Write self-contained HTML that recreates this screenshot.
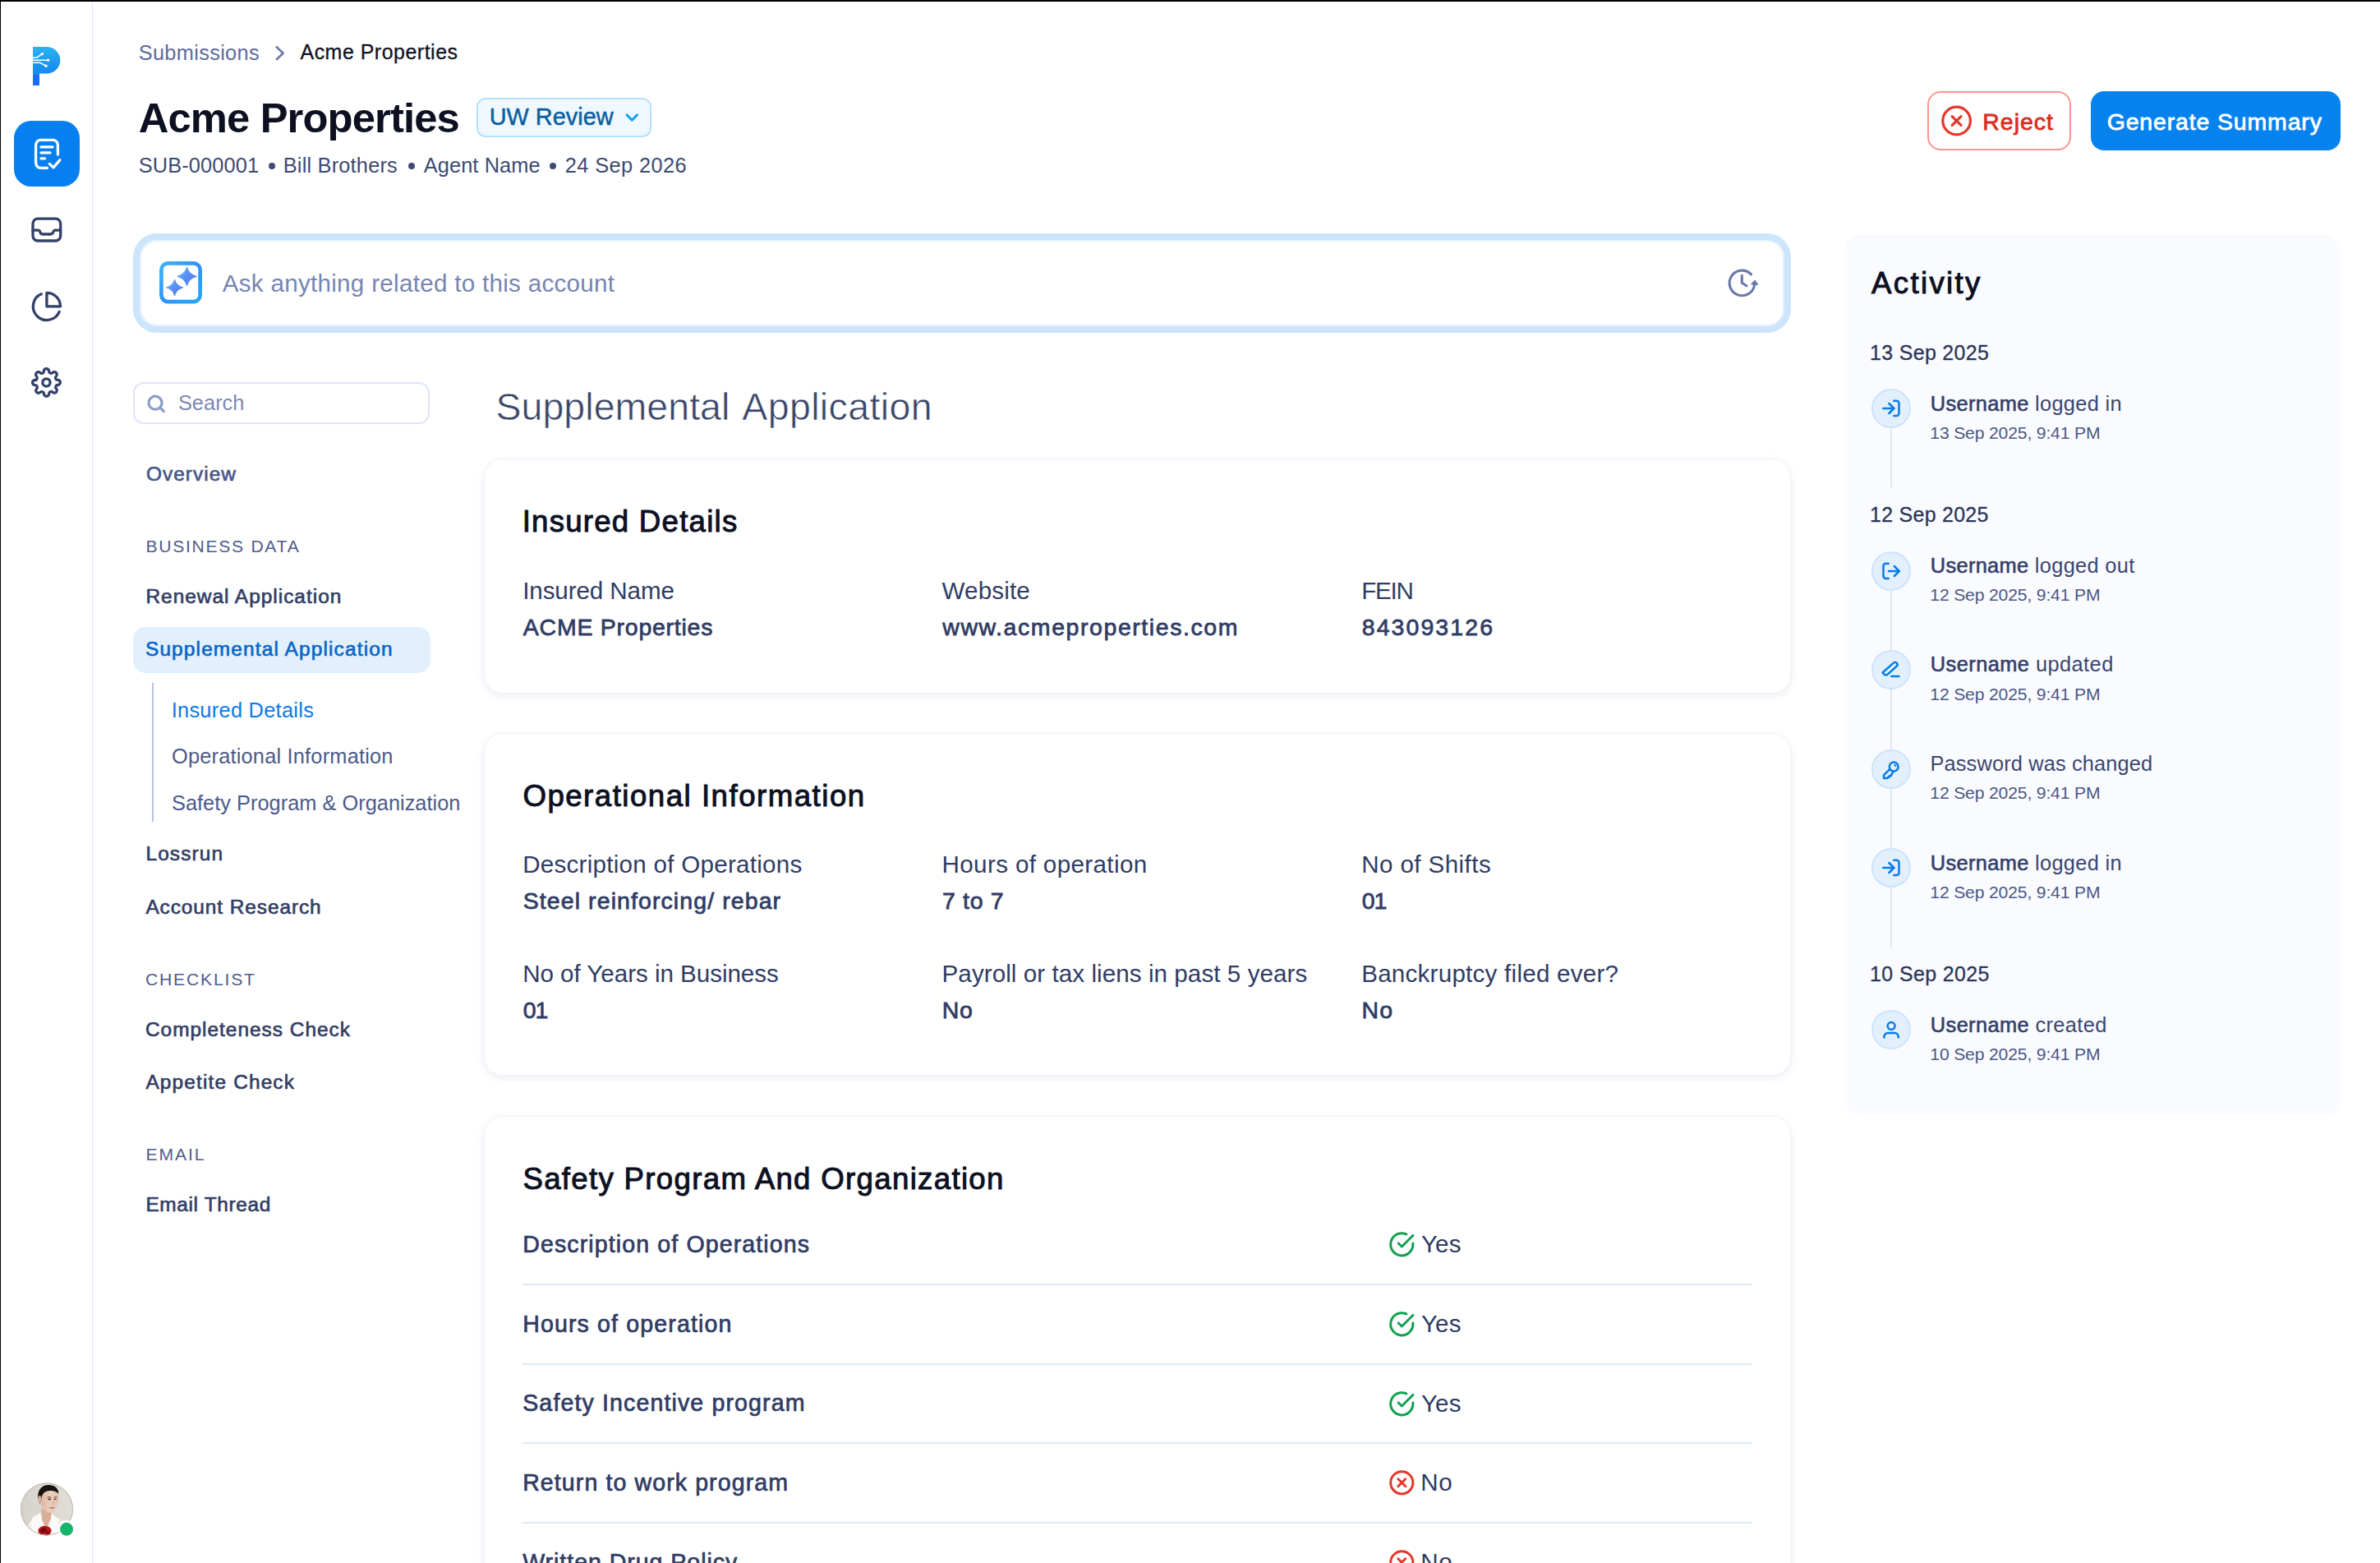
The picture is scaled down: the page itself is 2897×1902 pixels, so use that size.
<!DOCTYPE html>
<html lang="en">
<head>
<meta charset="utf-8">
<title>Acme Properties - Supplemental Application</title>
<style>
*{box-sizing:border-box;margin:0;padding:0}
html,body{width:2897px;height:1902px;overflow:hidden;background:#fff}
body{position:relative;font-family:"Liberation Sans",sans-serif;color:#38446b}
.a{position:absolute}
.t{position:absolute;white-space:pre;font-weight:400}
.t b{font-weight:700}
svg{position:absolute;overflow:visible}
.card{position:absolute;left:588.5px;width:1591.5px;background:#fff;border:1.5px solid #edf2fe;border-radius:23px;
 box-shadow:0 3px 10px rgba(105,110,150,.12)}
.div{position:absolute;left:636.2px;width:1496.5px;height:2px;background:#dfe7fb}
.ic{position:absolute;left:2277.5px;width:48px;height:48px;border-radius:50%;background:#e2f0fe;border:2px solid #cde3fb}
.vl{position:absolute;left:2300.5px;width:2px;background:#dfe6fb}
</style>
</head>
<body>

<!-- ===== window edges ===== -->
<div class="a" style="left:0;top:0;width:2897px;height:2px;background:#000"></div>
<div class="a" style="left:0;top:0;width:1px;height:1902px;background:#000"></div>

<!-- ===== icon rail ===== -->
<div class="a" style="left:111.5px;top:2px;width:1.8px;height:1900px;background:#e0e5fd"></div>

<!-- logo -->
<svg style="left:36px;top:52px" width="44" height="56" viewBox="36 52 44 56">
 <defs>
  <linearGradient id="lg1" x1="0" y1="0" x2="0" y2="1">
   <stop offset="0" stop-color="#29b4ef"/><stop offset=".55" stop-color="#1a8ff0"/><stop offset="1" stop-color="#1a7ff2"/>
  </linearGradient>
 </defs>
 <path d="M40 57H57A16.3 16.3 0 0 1 57 89.6H48V104H40Z" fill="url(#lg1)"/>
 <rect x="40" y="91" width="8" height="13" fill="#1a6ff6"/>
 <g fill="none" stroke="#fff" stroke-width="1.5" stroke-linecap="round" stroke-linejoin="round">
  <path d="M40 70.2H44.8L51 65.8"/><path d="M40 73.2H58"/><path d="M40 76.2H48.5L55.6 80"/>
 </g>
 <g fill="#fff"><circle cx="51.4" cy="65.6" r="1.7"/><circle cx="58.5" cy="73.2" r="1.7"/><circle cx="56" cy="80.3" r="1.7"/></g>
</svg>

<!-- active nav button -->
<div class="a" style="left:17px;top:147px;width:80px;height:80px;border-radius:21px;background:#0680f0"></div>
<svg style="left:36px;top:163px" width="44" height="48" viewBox="36 163 44 48" fill="none" stroke="#fff" stroke-width="3.3" stroke-linecap="round" stroke-linejoin="round">
 <path d="M57.5 204.3H49.6A6 6 0 0 1 43.6 198.3V176.4A6 6 0 0 1 49.6 170.4H64.4A6 6 0 0 1 70.4 176.4V188"/>
 <path d="M50 178.9H64"/><path d="M50 185.9H61"/><path d="M50 192.8H54.5"/>
 <path d="M60.2 199.4L65 203.8L72.8 194.8"/>
</svg>

<!-- inbox -->
<svg style="left:36px;top:262px" width="42" height="36" viewBox="36 262 42 36" fill="none" stroke="#344069" stroke-width="3.3" stroke-linecap="round" stroke-linejoin="round">
 <rect x="40" y="266.2" width="33.7" height="26.8" rx="6"/>
 <path d="M40 280.2H46.5C48 280.2 48.3 281 48.8 282.3C49.5 284.2 50.4 285 52.3 285H61.4C63.3 285 64.2 284.2 64.9 282.3C65.4 281 65.7 280.2 67.2 280.2H73.7"/>
</svg>

<!-- pie chart -->
<svg style="left:36.7px;top:353.1px" width="39.84" height="39.84" viewBox="0 0 24 24" fill="none" stroke="#344069" stroke-width="2" stroke-linecap="round" stroke-linejoin="round">
 <path d="M21.21 15.89A10 10 0 1 1 8 2.83"/><path d="M22 12A10 10 0 0 0 12 2v10z"/>
</svg>

<!-- settings -->
<svg style="left:38.4px;top:446.8px" width="36.9" height="36.9" viewBox="0 0 24 24" fill="none" stroke="#344069" stroke-width="2.15" stroke-linecap="round" stroke-linejoin="round">
 <circle cx="12" cy="12" r="3"/>
 <path d="M19.4 15a1.65 1.65 0 0 0 .33 1.82l.06.06a2 2 0 0 1 0 2.83 2 2 0 0 1-2.83 0l-.06-.06a1.65 1.65 0 0 0-1.82-.33 1.65 1.65 0 0 0-1 1.51V21a2 2 0 0 1-2 2 2 2 0 0 1-2-2v-.09A1.65 1.65 0 0 0 9 19.4a1.65 1.65 0 0 0-1.82.33l-.06.06a2 2 0 0 1-2.83 0 2 2 0 0 1 0-2.83l.06-.06a1.65 1.65 0 0 0 .33-1.82 1.65 1.65 0 0 0-1.51-1H3a2 2 0 0 1-2-2 2 2 0 0 1 2-2h.09A1.65 1.65 0 0 0 4.6 9a1.65 1.65 0 0 0-.33-1.82l-.06-.06a2 2 0 0 1 0-2.83 2 2 0 0 1 2.83 0l.06.06a1.65 1.65 0 0 0 1.82.33H9a1.65 1.65 0 0 0 1-1.51V3a2 2 0 0 1 2-2 2 2 0 0 1 2 2v.09a1.65 1.65 0 0 0 1 1.51 1.65 1.65 0 0 0 1.82-.33l.06-.06a2 2 0 0 1 2.83 0 2 2 0 0 1 0 2.83l-.06.06a1.65 1.65 0 0 0-.33 1.82V9a1.65 1.65 0 0 0 1.51 1H21a2 2 0 0 1 2 2 2 2 0 0 1-2 2h-.09a1.65 1.65 0 0 0-1.51 1z"/>
</svg>

<!-- avatar -->
<svg style="left:25px;top:1804px" width="66" height="66" viewBox="0 0 66 66">
 <defs>
  <clipPath id="av"><circle cx="32" cy="32.5" r="32"/></clipPath>
  <linearGradient id="avbg" x1="0" y1="0" x2="1" y2="0"><stop offset="0" stop-color="#d6d2cc"/><stop offset="1" stop-color="#e2dfda"/></linearGradient>
  <linearGradient id="avsk" x1="0" y1="0" x2="1" y2="0"><stop offset="0" stop-color="#d9b39d"/><stop offset=".6" stop-color="#ecd0be"/><stop offset="1" stop-color="#e3c1ad"/></linearGradient>
 </defs>
 <g clip-path="url(#av)">
  <rect width="66" height="66" fill="url(#avbg)"/>
  <path d="M3 66C5 51 13 46 21 43L29 40L42 42C51 45 59 51 63 66Z" fill="#efeae2"/>
  <path d="M15 42L24 37L30 52L28 66H15L12 49Z" fill="#fbfaf7"/>
  <path d="M37 37L46 45L48 66H34L35 51Z" fill="#fbfaf7"/>
  <path d="M25 32L38 33L37 44L31 57L26 45Z" fill="#d9ad96"/>
  <path d="M22.6 17C22 8 28 4.5 34.5 4.5C41 4.500 46.500 9 46.500 17C46.500 25 44 31 40 35C38 37 34.5 37.500 32 36C27 33 23.200 26 22.600 17Z" fill="url(#avsk)"/>
  <path d="M21.600 20C19.500 9 26.500 3 34 3C41 3 46.500 7 46.200 13.500C42 9.500 35 9 30 11.500C26.500 13.500 25.500 17 25 22.500Z" fill="#191310"/>
  <ellipse cx="23.400" cy="19.500" rx="1.900" ry="3.600" fill="#d5a992"/>
  <ellipse cx="23.400" cy="24.300" rx="1.300" ry="2.300" fill="#b4b4a4"/>
  <path d="M32.500 18.200Q35 17 37.500 18.400M40.500 18.300Q42.500 17.300 44.300 18" stroke="#4b2f27" stroke-width="0.9" fill="none"/>
  <ellipse cx="35.300" cy="20.400" rx="1.900" ry="0.900" fill="#3a2620"/>
  <ellipse cx="42.300" cy="20.300" rx="1.600" ry="0.800" fill="#3a2620"/>
  <path d="M39.300 21.500L40 26.500L38 27.200" stroke="#c99a86" stroke-width="0.9" fill="none"/>
  <path d="M35.500 30.600Q38.300 32.200 41.200 30.500Q38.300 31 35.500 30.600Z" fill="#b4685f" stroke="#b4685f" stroke-width="0.8"/>
  <ellipse cx="29.500" cy="59" rx="8" ry="6.200" fill="#b5121b"/>
  <ellipse cx="28" cy="58" rx="3.500" ry="2.500" fill="#6e0a10"/>
  <ellipse cx="33" cy="61" rx="2.500" ry="1.800" fill="#7d0c12"/>
  <ellipse cx="25" cy="61.500" rx="2" ry="1.500" fill="#8a0e15"/>
 </g>
 <circle cx="32" cy="32.500" r="31.500" fill="none" stroke="#bdb5ab" stroke-width="1"/>
 <circle cx="56" cy="56.800" r="10.700" fill="#fff"/>
 <circle cx="56" cy="56.800" r="8" fill="#18b56c"/>
</svg>

<!-- ===== header ===== -->
<svg style="left:330px;top:52px" width="22" height="26" viewBox="330 52 22 26" fill="none" stroke="#6a78a8" stroke-width="2.6" stroke-linecap="round" stroke-linejoin="round">
 <path d="M336.8 57.2L344.6 64.7L336.8 72.2"/>
</svg>

<div class="a" style="left:580px;top:119.2px;width:213px;height:47.6px;border-radius:11px;background:#eff8ff;border:2px solid #b5e1fb"></div>
<svg style="left:758px;top:134px" width="24" height="18" viewBox="758 134 24 18" fill="none" stroke="#0ea5e9" stroke-width="3" stroke-linecap="round" stroke-linejoin="round">
 <path d="M763 139.8L769.3 146.2L775.6 139.8"/>
</svg>

<div class="a" style="left:2346px;top:111px;width:174.6px;height:72.3px;border-radius:16px;background:#fff;border:2px solid #fb958d"></div>
<svg style="left:2361px;top:126px" width="42" height="42" viewBox="2361 126 42 42" fill="none" stroke="#e5372b" stroke-width="3.2" stroke-linecap="round">
 <circle cx="2381.6" cy="147" r="16.8"/>
 <path d="M2376.2 141.6L2387 152.4M2387 141.6L2376.2 152.4"/>
</svg>
<div class="a" style="left:2544.8px;top:111px;width:304px;height:72.3px;border-radius:16px;background:#0682ee"></div>

<div class="a" style="left:327.2px;top:197.8px;width:8px;height:8px;border-radius:50%;background:#3d4a73"></div>
<div class="a" style="left:496.5px;top:197.8px;width:8px;height:8px;border-radius:50%;background:#3d4a73"></div>
<div class="a" style="left:669.2px;top:197.8px;width:8px;height:8px;border-radius:50%;background:#3d4a73"></div>

<!-- ask box -->
<div class="a" style="left:162px;top:284px;width:2018px;height:120.5px;border-radius:29px;background:#fff;border:8px solid #cde5fb;box-shadow:inset 0 0 0 2px #e4f1fd"></div>
<svg style="left:194px;top:318px" width="52" height="52" viewBox="0 0 52 52">
 <defs>
  <linearGradient id="ai1" x1="0" y1="0" x2="1" y2="1"><stop offset="0" stop-color="#3fb2fb"/><stop offset=".5" stop-color="#2e93f8"/><stop offset="1" stop-color="#22a8fb"/></linearGradient>
  <linearGradient id="ai2" x1="0" y1="0" x2="1" y2="1"><stop offset="0" stop-color="#5cc4fb"/><stop offset=".55" stop-color="#5b86f7"/><stop offset="1" stop-color="#3f8ef8"/></linearGradient>
 </defs>
 <rect x="2.4" y="2.3" width="47.2" height="46.8" rx="8" fill="#fff" stroke="url(#ai1)" stroke-width="4.7"/>
 <path d="M33.5 6.9C35.9 13.5 38.5 16.0 45.3 18.3C38.5 20.6 35.9 23.1 33.5 29.7C31.1 23.1 28.5 20.6 21.7 18.3C28.5 16.0 31.1 13.5 33.5 6.9Z" fill="url(#ai2)" stroke="url(#ai2)" stroke-width="1" stroke-linejoin="round"/>
 <path d="M18.6 21.9C20.6 27.7 22.9 29.9 28.8 31.9C22.9 33.9 20.6 36.1 18.6 41.9C16.6 36.1 14.3 33.9 8.4 31.9C14.3 29.9 16.6 27.7 18.6 21.9Z" fill="url(#ai2)" stroke="url(#ai2)" stroke-width="1" stroke-linejoin="round"/>
</svg>
<svg style="left:2100px;top:324px" width="44" height="40" viewBox="2100 324 44 40" fill="none" stroke="#6b79a8" stroke-width="3.1" stroke-linecap="round" stroke-linejoin="round">
 <path d="M2131.6 333.9A15.3 15.3 0 1 0 2135.6 346.6"/>
 <path d="M2120.3 335.4V344.2L2126 347.8"/>
 <path d="M2132 345.8L2136.2 341.4L2139.4 346.4Z" fill="#6b79a8" stroke-width="1.4"/>
</svg>

<!-- ===== left nav ===== -->
<div class="a" style="left:162px;top:465px;width:361px;height:51px;border-radius:13px;background:#fff;border:2px solid #dfe3fc"></div>
<svg style="left:176px;top:478px" width="28" height="28" viewBox="176 478 28 28" fill="none" stroke="#8e9cc4" stroke-width="3.2" stroke-linecap="round">
 <circle cx="189" cy="490.2" r="8"/><path d="M194.9 496.2L199.3 500.6"/>
</svg>
<div class="a" style="left:162px;top:763px;width:362px;height:56px;border-radius:15px;background:#e2f0fe"></div>
<div class="a" style="left:184.6px;top:831px;width:2px;height:169px;background:#b9c3dd"></div>

<!-- ===== cards ===== -->
<div class="card" style="top:557.5px;height:286px"></div>
<div class="card" style="top:891.5px;height:417.5px"></div>
<div class="card" style="top:1358.3px;height:620px"></div>

<div class="div" style="top:1562.1px"></div>
<div class="div" style="top:1658.8px"></div>
<div class="div" style="top:1755.4px"></div>
<div class="div" style="top:1852.1px"></div>

<svg style="left:1689.9px;top:1498.2px" width="32.6" height="32.6" viewBox="0 0 24 24" fill="none" stroke="#12a150" stroke-width="2.2" stroke-linecap="round" stroke-linejoin="round"><path d="M22 11.08V12a10 10 0 1 1-5.93-9.14"/><path d="M22 4L12 14.01l-3-3"/></svg>
<svg style="left:1689.9px;top:1594.9px" width="32.6" height="32.6" viewBox="0 0 24 24" fill="none" stroke="#12a150" stroke-width="2.2" stroke-linecap="round" stroke-linejoin="round"><path d="M22 11.08V12a10 10 0 1 1-5.93-9.14"/><path d="M22 4L12 14.01l-3-3"/></svg>
<svg style="left:1689.9px;top:1691.5px" width="32.6" height="32.6" viewBox="0 0 24 24" fill="none" stroke="#12a150" stroke-width="2.2" stroke-linecap="round" stroke-linejoin="round"><path d="M22 11.08V12a10 10 0 1 1-5.93-9.14"/><path d="M22 4L12 14.01l-3-3"/></svg>
<svg style="left:1689.9px;top:1788.2px" width="32.6" height="32.6" viewBox="0 0 24 24" fill="none" stroke="#e5372b" stroke-width="2.2" stroke-linecap="round" stroke-linejoin="round"><circle cx="12" cy="12" r="10"/><path d="M15.3 8.7l-6.6 6.6M8.7 8.7l6.6 6.6"/></svg>
<svg style="left:1689.9px;top:1884.9px" width="32.6" height="32.6" viewBox="0 0 24 24" fill="none" stroke="#e5372b" stroke-width="2.2" stroke-linecap="round" stroke-linejoin="round"><circle cx="12" cy="12" r="10"/><path d="M15.3 8.7l-6.6 6.6M8.7 8.7l6.6 6.6"/></svg>

<!-- ===== activity ===== -->
<div class="a" style="left:2245px;top:284px;width:604px;height:1073.5px;border-radius:22px;background:#fafbff"></div>
<div class="vl" style="top:520px;height:73px"></div>
<div class="vl" style="top:717px;height:436px"></div>
<div class="ic" style="top:473.2px"></div>
<svg style="left:2285.5px;top:481.2px" width="32" height="32" viewBox="-16 -16 32 32" fill="none" stroke="#0a7be8" stroke-width="2.5" stroke-linecap="round" stroke-linejoin="round"><path d="M3.3 -9.2H6.5A3 3 0 0 1 9.5 -6.2V6A3 3 0 0 1 6.5 9H3.3"/><path d="M-9.7 0H3.2"/><path d="M-2.6 -6L3.4 0L-2.6 6"/></svg>
<div class="ic" style="top:670.6px"></div>
<svg style="left:2285.5px;top:678.6px" width="32" height="32" viewBox="-16 -16 32 32" fill="none" stroke="#0a7be8" stroke-width="2.5" stroke-linecap="round" stroke-linejoin="round"><path d="M-3.3 -9.2H-6.5A3 3 0 0 0 -9.5 -6.2V6A3 3 0 0 0 -6.5 9H-3.3"/><path d="M-3 0H9.6"/><path d="M3.8 -6L9.8 0L3.8 6"/></svg>
<div class="ic" style="top:791.0px"></div>
<svg style="left:2285.5px;top:799.0px" width="32" height="32" viewBox="-16 -16 32 32" fill="none" stroke="#0a7be8" stroke-width="2.5" stroke-linecap="round" stroke-linejoin="round"><g transform="translate(-0.9 -1.2) rotate(-42)"><path d="M-10.2 -2.8H7.6A2.8 2.8 0 0 1 7.6 2.8H-8.2L-10.2 0.8Z"/></g><path d="M0.4 7.9H9.4"/></svg>
<div class="ic" style="top:911.6px"></div>
<svg style="left:2285.5px;top:919.6px" width="32" height="32" viewBox="-16 -16 32 32" fill="none" stroke="#0a7be8" stroke-width="2.5" stroke-linecap="round" stroke-linejoin="round"><circle cx="3.2" cy="-3.0" r="5.4"/><path d="M-1.4 -0.2L-9.0 7.2V11.0H-5.0L-3.9 9.8L-2.6 10.1L-1.9 8.0L-0.2 8.1L2.3 2.9"/><path d="M4.2 -5.2L5.4 -3.9" stroke-width="2"/></svg>
<div class="ic" style="top:1032.3px"></div>
<svg style="left:2285.5px;top:1040.3px" width="32" height="32" viewBox="-16 -16 32 32" fill="none" stroke="#0a7be8" stroke-width="2.5" stroke-linecap="round" stroke-linejoin="round"><path d="M3.3 -9.2H6.5A3 3 0 0 1 9.5 -6.2V6A3 3 0 0 1 6.5 9H3.3"/><path d="M-9.7 0H3.2"/><path d="M-2.6 -6L3.4 0L-2.6 6"/></svg>
<div class="ic" style="top:1229.3px"></div>
<svg style="left:2285.5px;top:1237.3px" width="32" height="32" viewBox="-16 -16 32 32" fill="none" stroke="#0a7be8" stroke-width="2.5" stroke-linecap="round" stroke-linejoin="round"><circle cx="0.1" cy="-4.6" r="4.4"/><path d="M-8.6 9.5V8.6A4.6 4.6 0 0 1 -4 4H4.2A4.6 4.6 0 0 1 8.8 8.6V9.5"/></svg>

<div class="t" style="left:168.70px;top:48.50px;font-size:25.36px;line-height:30.43px;letter-spacing:0.32px;color:#5b6a9d;">Submissions</div>
<div class="t" style="left:365.50px;top:48.77px;font-size:24.92px;line-height:29.9px;letter-spacing:0.528px;color:#10131f;-webkit-text-stroke:0.3px #10131f;">Acme Properties</div>
<div class="t" style="left:168.70px;top:113.70px;font-size:50.72px;line-height:60.86px;letter-spacing:-0.857px;color:#0d1020;font-weight:700;">Acme Properties</div>
<div class="t" style="left:595.70px;top:125.34px;font-size:28.86px;line-height:34.63px;letter-spacing:0.023px;color:#0b5f9e;-webkit-text-stroke:0.5px #0b5f9e;">UW Review</div>
<div class="t" style="left:168.70px;top:185.60px;font-size:25.36px;line-height:30.43px;letter-spacing:0.132px;color:#3d4a73;">SUB-000001</div>
<div class="t" style="left:344.70px;top:185.60px;font-size:25.36px;line-height:30.43px;letter-spacing:0.199px;color:#3d4a73;">Bill Brothers</div>
<div class="t" style="left:515.70px;top:185.60px;font-size:25.36px;line-height:30.43px;letter-spacing:0.111px;color:#3d4a73;">Agent Name</div>
<div class="t" style="left:687.70px;top:185.60px;font-size:25.36px;line-height:30.43px;letter-spacing:0.4px;color:#3d4a73;">24 Sep 2026</div>
<div class="t" style="left:2413.30px;top:130.76px;font-size:28.48px;line-height:34.18px;letter-spacing:1.0px;color:#d92d20;-webkit-text-stroke:0.76px #d92d20;">Reject</div>
<div class="t" style="left:2564.70px;top:130.76px;font-size:28.48px;line-height:34.18px;letter-spacing:0.854px;color:#ffffff;-webkit-text-stroke:0.76px #ffffff;">Generate Summary</div>
<div class="t" style="left:270.70px;top:326.69px;font-size:29.59px;line-height:35.51px;letter-spacing:0.298px;color:#7685b3;">Ask anything related to this account</div>
<div class="t" style="left:216.90px;top:475.40px;font-size:25.36px;line-height:30.43px;letter-spacing:0.04px;color:#7c89b5;">Search</div>
<div class="t" style="left:177.96px;top:562.46px;font-size:24.42px;line-height:29.3px;letter-spacing:1.04px;color:#475585;-webkit-text-stroke:0.65px #475585;">Overview</div>
<div class="t" style="left:177.38px;top:652.20px;font-size:21.13px;line-height:25.36px;letter-spacing:1.704px;color:#4e5b8c;">BUSINESS DATA</div>
<div class="t" style="left:177.45px;top:710.96px;font-size:24.42px;line-height:29.3px;letter-spacing:1.004px;color:#313d65;-webkit-text-stroke:0.65px #313d65;">Renewal Application</div>
<div class="t" style="left:176.96px;top:775.46px;font-size:24.42px;line-height:29.3px;letter-spacing:1.151px;color:#0866c6;-webkit-text-stroke:0.65px #0866c6;">Supplemental Application</div>
<div class="t" style="left:208.68px;top:849.00px;font-size:25.36px;line-height:30.43px;letter-spacing:0.29px;color:#0a7be8;">Insured Details</div>
<div class="t" style="left:209.00px;top:905.30px;font-size:25.36px;line-height:30.43px;letter-spacing:0.201px;color:#4b5a8a;">Operational Information</div>
<div class="t" style="left:209.00px;top:961.60px;font-size:25.36px;line-height:30.43px;letter-spacing:0.015px;color:#4b5a8a;">Safety Program &amp; Organization</div>
<div class="t" style="left:177.45px;top:1024.36px;font-size:24.42px;line-height:29.3px;letter-spacing:1.115px;color:#313d65;-webkit-text-stroke:0.65px #313d65;">Lossrun</div>
<div class="t" style="left:177.38px;top:1088.86px;font-size:24.42px;line-height:29.3px;letter-spacing:0.922px;color:#313d65;-webkit-text-stroke:0.65px #313d65;">Account Research</div>
<div class="t" style="left:176.98px;top:1178.70px;font-size:21.13px;line-height:25.36px;letter-spacing:1.805px;color:#4e5b8c;">CHECKLIST</div>
<div class="t" style="left:176.96px;top:1237.86px;font-size:24.42px;line-height:29.3px;letter-spacing:1.003px;color:#313d65;-webkit-text-stroke:0.65px #313d65;">Completeness Check</div>
<div class="t" style="left:177.38px;top:1302.36px;font-size:24.42px;line-height:29.3px;letter-spacing:1.157px;color:#313d65;-webkit-text-stroke:0.65px #313d65;">Appetite Check</div>
<div class="t" style="left:177.38px;top:1392.40px;font-size:21.13px;line-height:25.36px;letter-spacing:1.96px;color:#4e5b8c;">EMAIL</div>
<div class="t" style="left:177.45px;top:1451.16px;font-size:24.42px;line-height:29.3px;letter-spacing:0.645px;color:#313d65;-webkit-text-stroke:0.65px #313d65;">Email Thread</div>
<div class="t" style="left:603.50px;top:467.50px;font-size:46.49px;line-height:55.79px;letter-spacing:0.053px;color:#3a4668;-webkit-text-stroke:0.55px #fff;">Supplemental</div>
<div class="t" style="left:903.30px;top:467.50px;font-size:46.49px;line-height:55.79px;letter-spacing:0.38px;color:#3a4668;-webkit-text-stroke:0.55px #fff;">Application</div>
<div class="t" style="left:635.63px;top:613.34px;font-size:36.63px;line-height:43.96px;letter-spacing:1.239px;color:#0d1022;-webkit-text-stroke:0.97px #0d1022;">Insured Details</div>
<div class="t" style="left:636.17px;top:700.69px;font-size:29.59px;line-height:35.51px;letter-spacing:-0.086px;color:#303c64;">Insured Name</div>
<div class="t" style="left:636.86px;top:745.66px;font-size:28.48px;line-height:34.18px;letter-spacing:0.762px;color:#303c64;-webkit-text-stroke:0.76px #303c64;">ACME Properties</div>
<div class="t" style="left:1146.60px;top:700.69px;font-size:29.59px;line-height:35.51px;letter-spacing:0.135px;color:#303c64;">Website</div>
<div class="t" style="left:1147.26px;top:745.66px;font-size:28.48px;line-height:34.18px;letter-spacing:1.585px;color:#303c64;-webkit-text-stroke:0.76px #303c64;">www.acmeproperties.com</div>
<div class="t" style="left:1657.17px;top:700.69px;font-size:29.59px;line-height:35.51px;letter-spacing:-1.247px;color:#303c64;">FEIN</div>
<div class="t" style="left:1657.71px;top:745.66px;font-size:28.48px;line-height:34.18px;letter-spacing:2.098px;color:#303c64;-webkit-text-stroke:0.76px #303c64;">843093126</div>
<div class="t" style="left:636.40px;top:947.04px;font-size:36.63px;line-height:43.96px;letter-spacing:1.501px;color:#0d1022;-webkit-text-stroke:0.97px #0d1022;">Operational Information</div>
<div class="t" style="left:636.17px;top:1034.39px;font-size:29.59px;line-height:35.51px;letter-spacing:0.268px;color:#303c64;">Description of Operations</div>
<div class="t" style="left:636.71px;top:1079.36px;font-size:28.48px;line-height:34.18px;letter-spacing:1.103px;color:#303c64;-webkit-text-stroke:0.76px #303c64;">Steel reinforcing/ rebar</div>
<div class="t" style="left:1146.57px;top:1034.39px;font-size:29.59px;line-height:35.51px;letter-spacing:0.367px;color:#303c64;">Hours of operation</div>
<div class="t" style="left:1146.94px;top:1079.36px;font-size:28.48px;line-height:34.18px;letter-spacing:0.704px;color:#303c64;-webkit-text-stroke:0.76px #303c64;">7 to 7</div>
<div class="t" style="left:1657.17px;top:1034.39px;font-size:29.59px;line-height:35.51px;letter-spacing:0.422px;color:#303c64;">No of Shifts</div>
<div class="t" style="left:1657.71px;top:1079.36px;font-size:28.48px;line-height:34.18px;letter-spacing:-1.0px;color:#303c64;-webkit-text-stroke:0.76px #303c64;">01</div>
<div class="t" style="left:636.17px;top:1166.89px;font-size:29.59px;line-height:35.51px;letter-spacing:-0.034px;color:#303c64;">No of Years in Business</div>
<div class="t" style="left:636.71px;top:1211.86px;font-size:28.48px;line-height:34.18px;letter-spacing:-1.0px;color:#303c64;-webkit-text-stroke:0.76px #303c64;">01</div>
<div class="t" style="left:1146.57px;top:1166.89px;font-size:29.59px;line-height:35.51px;letter-spacing:0.07px;color:#303c64;">Payroll or tax liens in past 5 years</div>
<div class="t" style="left:1146.84px;top:1211.86px;font-size:28.48px;line-height:34.18px;letter-spacing:0.656px;color:#303c64;-webkit-text-stroke:0.76px #303c64;">No</div>
<div class="t" style="left:1657.17px;top:1166.89px;font-size:29.59px;line-height:35.51px;letter-spacing:0.249px;color:#303c64;">Banckruptcy filed ever?</div>
<div class="t" style="left:1657.44px;top:1211.86px;font-size:28.48px;line-height:34.18px;letter-spacing:1.2px;color:#303c64;-webkit-text-stroke:0.76px #303c64;">No</div>
<div class="t" style="left:636.40px;top:1413.44px;font-size:36.63px;line-height:43.96px;letter-spacing:1.314px;color:#0d1022;-webkit-text-stroke:0.97px #0d1022;">Safety Program And Organization</div>
<div class="t" style="left:636.17px;top:1497.11px;font-size:28.57px;line-height:34.28px;letter-spacing:1.111px;color:#303c64;-webkit-text-stroke:0.7px #303c64;">Description of Operations</div>
<div class="t" style="left:1729.90px;top:1496.49px;font-size:29.59px;line-height:35.51px;letter-spacing:0.2px;color:#2f3b63;">Yes</div>
<div class="t" style="left:636.17px;top:1593.81px;font-size:28.57px;line-height:34.28px;letter-spacing:1.132px;color:#303c64;-webkit-text-stroke:0.7px #303c64;">Hours of operation</div>
<div class="t" style="left:1729.90px;top:1593.19px;font-size:29.59px;line-height:35.51px;letter-spacing:0.2px;color:#2f3b63;">Yes</div>
<div class="t" style="left:636.21px;top:1690.41px;font-size:28.57px;line-height:34.28px;letter-spacing:1.12px;color:#303c64;-webkit-text-stroke:0.7px #303c64;">Safety Incentive program</div>
<div class="t" style="left:1729.90px;top:1689.79px;font-size:29.59px;line-height:35.51px;letter-spacing:0.2px;color:#2f3b63;">Yes</div>
<div class="t" style="left:636.17px;top:1787.11px;font-size:28.57px;line-height:34.28px;letter-spacing:1.088px;color:#303c64;-webkit-text-stroke:0.7px #303c64;">Return to work program</div>
<div class="t" style="left:1729.30px;top:1786.49px;font-size:29.59px;line-height:35.51px;letter-spacing:0.6px;color:#2f3b63;">No</div>
<div class="t" style="left:636.20px;top:1883.81px;font-size:28.57px;line-height:34.28px;letter-spacing:0.956px;color:#303c64;-webkit-text-stroke:0.7px #303c64;">Written Drug Policy</div>
<div class="t" style="left:1729.30px;top:1883.19px;font-size:29.59px;line-height:35.51px;letter-spacing:0.6px;color:#2f3b63;">No</div>
<div class="t" style="left:2278.10px;top:323.44px;font-size:36.63px;line-height:43.96px;letter-spacing:2.313px;color:#0d1022;-webkit-text-stroke:0.97px #0d1022;">Activity</div>
<div class="t" style="left:2276.10px;top:414.87px;font-size:24.92px;line-height:29.9px;letter-spacing:0.34px;color:#2b3558;-webkit-text-stroke:0.3px #2b3558;">13 Sep 2025</div>
<div class="t" style="left:2276.10px;top:612.07px;font-size:24.92px;line-height:29.9px;letter-spacing:0.3px;color:#2b3558;-webkit-text-stroke:0.3px #2b3558;">12 Sep 2025</div>
<div class="t" style="left:2276.10px;top:1171.47px;font-size:24.92px;line-height:29.9px;letter-spacing:0.4px;color:#2b3558;-webkit-text-stroke:0.3px #2b3558;">10 Sep 2025</div>
<div class="t" style="left:2349.85px;top:475.50px;font-size:25.36px;line-height:30.43px;letter-spacing:0.346px;color:#3a4670;"><span style="color:#33406a;-webkit-text-stroke:0.62px #33406a">Username</span> logged in</div>
<div class="t" style="left:2349.30px;top:513.60px;font-size:21.13px;line-height:25.36px;letter-spacing:-0.158px;color:#4b5883;">13 Sep 2025, 9:41 PM</div>
<div class="t" style="left:2349.85px;top:672.70px;font-size:25.36px;line-height:30.43px;letter-spacing:0.327px;color:#3a4670;"><span style="color:#33406a;-webkit-text-stroke:0.62px #33406a">Username</span> logged out</div>
<div class="t" style="left:2349.30px;top:710.80px;font-size:21.13px;line-height:25.36px;letter-spacing:-0.158px;color:#4b5883;">12 Sep 2025, 9:41 PM</div>
<div class="t" style="left:2349.85px;top:793.40px;font-size:25.36px;line-height:30.43px;letter-spacing:0.447px;color:#3a4670;"><span style="color:#33406a;-webkit-text-stroke:0.62px #33406a">Username</span> updated</div>
<div class="t" style="left:2349.30px;top:831.50px;font-size:21.13px;line-height:25.36px;letter-spacing:-0.158px;color:#4b5883;">12 Sep 2025, 9:41 PM</div>
<div class="t" style="left:2349.48px;top:913.70px;font-size:25.36px;line-height:30.43px;letter-spacing:0.15px;color:#3a4670;">Password was changed</div>
<div class="t" style="left:2349.30px;top:951.80px;font-size:21.13px;line-height:25.36px;letter-spacing:-0.158px;color:#4b5883;">12 Sep 2025, 9:41 PM</div>
<div class="t" style="left:2349.85px;top:1034.60px;font-size:25.36px;line-height:30.43px;letter-spacing:0.346px;color:#3a4670;"><span style="color:#33406a;-webkit-text-stroke:0.62px #33406a">Username</span> logged in</div>
<div class="t" style="left:2349.30px;top:1072.70px;font-size:21.13px;line-height:25.36px;letter-spacing:-0.158px;color:#4b5883;">12 Sep 2025, 9:41 PM</div>
<div class="t" style="left:2349.85px;top:1231.50px;font-size:25.36px;line-height:30.43px;letter-spacing:0.394px;color:#3a4670;"><span style="color:#33406a;-webkit-text-stroke:0.62px #33406a">Username</span> created</div>
<div class="t" style="left:2349.30px;top:1269.60px;font-size:21.13px;line-height:25.36px;letter-spacing:-0.158px;color:#4b5883;">10 Sep 2025, 9:41 PM</div>
</body>
</html>
